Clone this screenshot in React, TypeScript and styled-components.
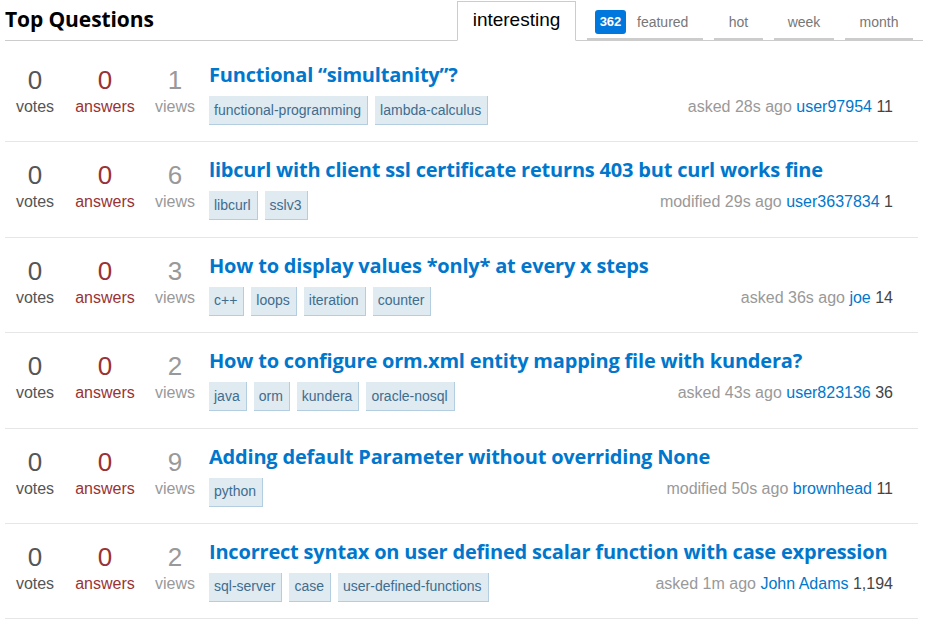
import React from "react";
import styled, { createGlobalStyle } from "styled-components";

const Global = createGlobalStyle`
  html, body { margin: 0; padding: 0; background: #fff; }
  body { font-family: "Liberation Sans", Arial, sans-serif; }
  * { box-sizing: border-box; }
`;

const Page = styled.div`
  width: 935px;
  padding-left: 5px;
`;

const Header = styled.div`
  width: 918px;
  height: 41px;
  display: flex;
  align-items: flex-end;
  justify-content: space-between;
  border-bottom: 1px solid #cccccc;
`;

const PageTitle = styled.h1`
  margin: 0;
  align-self: center;
  margin-top: -2px;
  font-family: "Open Sans", "Noto Sans", sans-serif;
  font-weight: 700;
  font-size: 21px;
  color: #000;
  letter-spacing: -0.1px;
`;

const Tabs = styled.div`
  display: flex;
  align-items: flex-end;
  gap: 11px;
  margin-right: 10px;
  margin-bottom: -1px;
`;

const ActiveTab = styled.div`
  width: 119px;
  height: 40px;
  border: 1px solid #cccccc;
  border-bottom: 1px solid #fff;
  background: #fff;
  display: flex;
  align-items: center;
  justify-content: center;
  font-size: 19px;
  color: #000;
  padding-bottom: 3px;
`;

const Tab = styled.div<{ $w: number; $start?: boolean }>`
  width: ${(p) => p.$w}px;
  height: 39px;
  border-bottom: 2px solid #cccccc;
  margin-bottom: 1px;
  display: flex;
  align-items: center;
  justify-content: ${(p) => (p.$start ? "flex-start" : "center")};
  padding-left: ${(p) => (p.$start ? "8px" : "0")};
  gap: 11px;
  font-size: 14px;
  color: #777;
  padding-top: 4px;
`;

const Badge = styled.span`
  display: inline-flex;
  align-items: center;
  justify-content: center;
  width: 31px;
  height: 24px;
  border-radius: 3px;
  background: #0077dd;
  color: #fff;
  font-weight: 700;
  font-size: 13px;
`;

const List = styled.div`
  width: 913px;
  margin-top: 6px;
`;

const Row = styled.div`
  display: flex;
  height: 95.4px;
  border-bottom: 1px solid #e4e6e8;
`;

const Stats = styled.div`
  display: flex;
  width: 210px;
  margin-left: -5px;
  padding-top: 18px;
`;

const Stat = styled.div<{ $color: string }>`
  width: 70px;
  display: flex;
  flex-direction: column;
  align-items: center;
  color: ${(p) => p.$color};
`;

const StatNum = styled.div`
  font-size: 26px;
  line-height: 30px;
`;

const StatLabel = styled.div`
  font-size: 16px;
  line-height: 20px;
  margin-top: 2px;
`;

const Summary = styled.div`
  flex: 1;
  padding-top: 15px;
  padding-right: 25px;
  margin-left: -1px;
`;

const QTitle = styled.a`
  display: block;
  font-family: "Open Sans", "Noto Sans", sans-serif;
  font-weight: 700;
  font-size: 20px;
  line-height: 26px;
  color: #0077cc;
  text-decoration: none;
  letter-spacing: -0.2px;
`;

const Bottom = styled.div`
  display: flex;
  align-items: center;
  justify-content: space-between;
  margin-top: 8px;
`;

const TagList = styled.div`
  display: flex;
  gap: 7px;
`;

const Tag = styled.span`
  display: inline-flex;
  align-items: center;
  height: 29px;
  padding: 0 6px 1px 5px;
  background: #e0eaf1;
  border-right: 1px solid #b3cee1;
  border-bottom: 1px solid #b3cee1;
  color: #3e6d8e;
  font-size: 14px;
`;

const Meta = styled.div`
  font-size: 16px;
  color: #999;
  white-space: nowrap;
  margin-top: -7px;
`;

const User = styled.a`
  color: #0077cc;
  text-decoration: none;
`;

const Rep = styled.span`
  color: #444;
`;

type Q = {
  votes: number;
  answers: number;
  views: number;
  title: string;
  tags: string[];
  action: string;
  time: string;
  user: string;
  rep: string;
};

const questions: Q[] = [
  { votes: 0, answers: 0, views: 1, title: "Functional \u201csimultanity\u201d?", tags: ["functional-programming", "lambda-calculus"], action: "asked", time: "28s ago", user: "user97954", rep: "11" },
  { votes: 0, answers: 0, views: 6, title: "libcurl with client ssl certificate returns 403 but curl works fine", tags: ["libcurl", "sslv3"], action: "modified", time: "29s ago", user: "user3637834", rep: "1" },
  { votes: 0, answers: 0, views: 3, title: "How to display values *only* at every x steps", tags: ["c++", "loops", "iteration", "counter"], action: "asked", time: "36s ago", user: "joe", rep: "14" },
  { votes: 0, answers: 0, views: 2, title: "How to configure orm.xml entity mapping file with kundera?", tags: ["java", "orm", "kundera", "oracle-nosql"], action: "asked", time: "43s ago", user: "user823136", rep: "36" },
  { votes: 0, answers: 0, views: 9, title: "Adding default Parameter without overriding None", tags: ["python"], action: "modified", time: "50s ago", user: "brownhead", rep: "11" },
  { votes: 0, answers: 0, views: 2, title: "Incorrect syntax on user defined scalar function with case expression", tags: ["sql-server", "case", "user-defined-functions"], action: "asked", time: "1m ago", user: "John Adams", rep: "1,194" },
];

export default function App() {
  return (
    <Page>
      <Global />
      <Header>
        <PageTitle>Top Questions</PageTitle>
        <Tabs>
          <ActiveTab>interesting</ActiveTab>
          <Tab $w={116} $start>
            <Badge>362</Badge>
            <span>featured</span>
          </Tab>
          <Tab $w={49}>hot</Tab>
          <Tab $w={60}>week</Tab>
          <Tab $w={68}>month</Tab>
        </Tabs>
      </Header>
      <List>
        {questions.map((q, i) => (
          <Row key={i}>
            <Stats>
              <Stat $color="#555">
                <StatNum>{q.votes}</StatNum>
                <StatLabel>votes</StatLabel>
              </Stat>
              <Stat $color="#933">
                <StatNum>{q.answers}</StatNum>
                <StatLabel>answers</StatLabel>
              </Stat>
              <Stat $color="#999">
                <StatNum>{q.views}</StatNum>
                <StatLabel>views</StatLabel>
              </Stat>
            </Stats>
            <Summary>
              <QTitle href="#">{q.title}</QTitle>
              <Bottom>
                <TagList>
                  {q.tags.map((t) => (
                    <Tag key={t}>{t}</Tag>
                  ))}
                </TagList>
                <Meta>
                  {q.action} {q.time} <User href="#">{q.user}</User> <Rep>{q.rep}</Rep>
                </Meta>
              </Bottom>
            </Summary>
          </Row>
        ))}
      </List>
    </Page>
  );
}
